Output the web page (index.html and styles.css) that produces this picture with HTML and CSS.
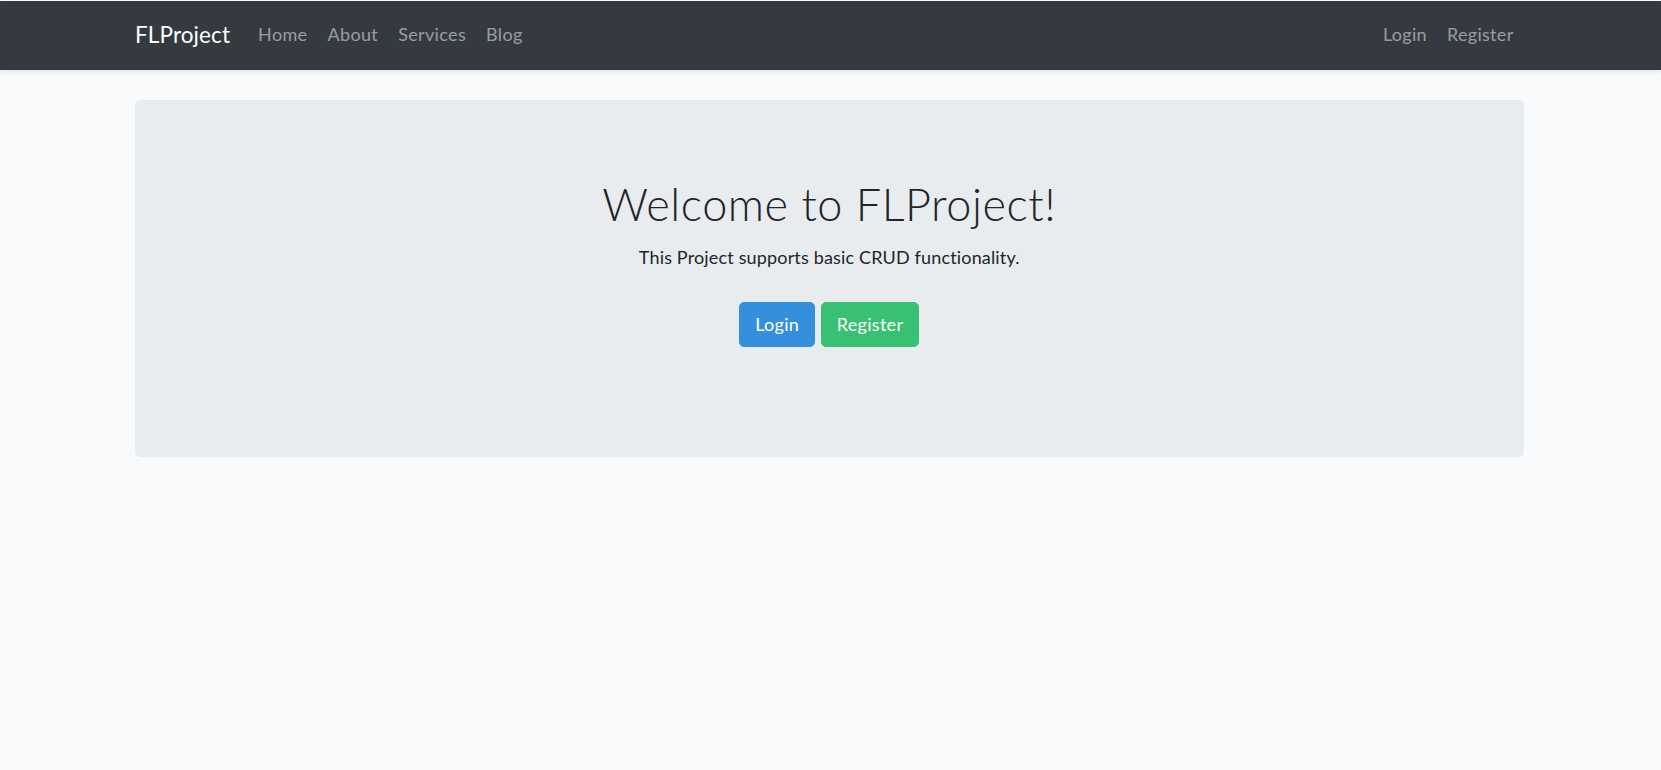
FILE: index.html
```html
<!DOCTYPE html>
<html lang="en">
<head>
<meta charset="utf-8">
<title>FLProject</title>
<link rel="stylesheet" href="styles.css">
</head>
<body>
<nav class="navbar">
  <div class="container nav-inner">
    <a class="brand" href="#">FLProject</a>
    <ul class="nav-links">
      <li><a href="#">Home</a></li>
      <li><a href="#">About</a></li>
      <li><a href="#">Services</a></li>
      <li><a href="#">Blog</a></li>
    </ul>
    <ul class="nav-links nav-right">
      <li><a href="#">Login</a></li>
      <li><a href="#">Register</a></li>
    </ul>
  </div>
</nav>
<main class="main">
  <div class="container">
    <div class="jumbotron">
      <h1 class="title">Welcome to FLProject!</h1>
      <p class="lead-text">This Project supports basic CRUD functionality.</p>
      <div class="actions">
        <a class="btn btn-primary" href="#">Login</a>
        <a class="btn btn-success" href="#">Register</a>
      </div>
    </div>
  </div>
</main>
</body>
</html>
```

FILE: styles.css
```css
* { box-sizing: border-box; }
html, body { margin: 0; padding: 0; }
body {
  background: #f8fafc;
  color: #212529;
  font-family: "Lato", "Noto Sans", "Liberation Sans", sans-serif;
  font-size: 18px;
  line-height: 1.6;
  padding-top: 1px;
}
a { text-decoration: none; }
.container {
  max-width: 1425px;
  margin: 0 auto;
  padding: 0 19.5px 0 17px;
}
.navbar {
  background: #343a40;
  height: 69px;
  box-shadow: 0 2.5px 5px rgba(0,0,0,.075);
  position: relative;
}
.nav-inner {
  display: flex;
  align-items: center;
  height: 100%;
  padding-bottom: 2px;
}
.brand {
  color: #fff;
  font-size: 22.5px;
  margin-right: 18px;
  line-height: 36px;
  letter-spacing: 0.1px;
}
.nav-links {
  display: flex;
  list-style: none;
  margin: 0;
  padding: 0;
}
.nav-links a {
  display: block;
  color: rgba(255,255,255,.5);
  padding: 10px 10px;
  font-size: 18px;
  letter-spacing: 0.35px;
}
.nav-right { margin-left: auto; }
.nav-right a { letter-spacing: 0.3px; }
.main { padding-top: 30px; }
.jumbotron {
  background: #e9ecef;
  border-radius: 5px;
  padding: 80px 40px;
  text-align: center;
}
.title {
  font-size: 45px;
  font-weight: 300;
  line-height: 54px;
  margin: -3px 0 13px;
  letter-spacing: 0.55px;
}
.lead-text {
  margin: -1px 0 30px;
  line-height: 28.8px;
  letter-spacing: 0.16px;
}
.actions {
  display: flex;
  justify-content: center;
  gap: 5.5px;
  margin-bottom: 30px;
}
.btn {
  display: inline-block;
  color: #fff;
  font-size: 18px;
  line-height: 28.8px;
  padding: 7px 15px;
  border: 1px solid transparent;
  border-radius: 5px;
  letter-spacing: 0.3px;
}
.btn-primary { background: #3490dc; border-color: #3490dc; }
.btn-success { background: #38c172; border-color: #38c172; }
```
